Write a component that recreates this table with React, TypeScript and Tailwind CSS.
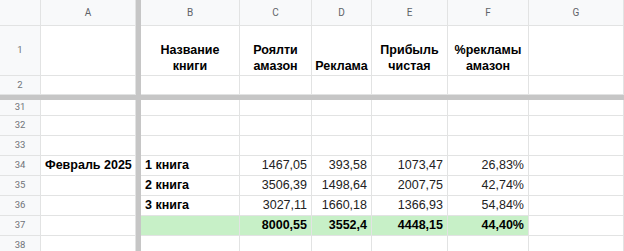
import React from 'react';

// Column widths in px: row-number, A, freeze bar, B..G
const COLS = ['w-[41px]', 'w-[95px]', 'w-[5px]', 'w-[99px]', 'w-[72px]', 'w-[60px]', 'w-[76px]', 'w-[81px]', 'w-[95px]'];

const cell = 'shrink-0 border-r border-b border-[#e2e3e3] overflow-hidden';

function HeaderRow() {
  const letters = ['A', '', 'B', 'C', 'D', 'E', 'F', 'G'];
  return (
    <div className="flex h-[26px] bg-[#f8f9fa]">
      <div className={`${cell} ${COLS[0]} border-[#dadcdf]`} />
      {letters.map((l, i) =>
        l === '' ? (
          <div key={i} className={`shrink-0 ${COLS[2]} bg-[#c6c6c6]`} />
        ) : (
          <div
            key={i}
            className={`${cell} ${COLS[i + 1]} border-[#dadcdf] flex items-center justify-center text-[10px] text-[#5f6368] font-['Roboto',sans-serif]`}
          >
            {l}
          </div>
        )
      )}
    </div>
  );
}

type Cells = { a?: string; b?: React.ReactNode; c?: string; d?: string; e?: string; f?: string };

function Row({ n, h, data = {}, title = false, total = false }: { n: string; h: string; data?: Cells; title?: boolean; total?: boolean }) {
  const green = total ? 'bg-[#c7f0c7]' : '';
  const num = `${cell} flex items-center justify-end pr-[4px] ${total ? 'font-bold text-black' : 'text-[#222]'} ${green}`;
  const head = `${cell} flex items-end justify-center text-center font-bold leading-[16px] pb-[1px] text-black`;
  return (
    <div className={`flex ${h} font-['Liberation_Sans',Arial,sans-serif] text-[12.5px]`}>
      <div className={`${cell} ${COLS[0]} bg-[#f8f9fa] border-[#dadcdf] flex items-center justify-center text-[9.5px] text-[#6f7378] font-['Roboto',sans-serif]`}>
        {n}
      </div>
      <div className={`${cell} ${COLS[1]} flex items-center pl-[4px] font-bold text-black whitespace-nowrap`}>{data.a}</div>
      <div className={`shrink-0 ${COLS[2]} bg-[#c6c6c6]`} />
      {title ? (
        <>
          <div className={`${head} ${COLS[3]}`}>{data.b}</div>
          <div className={`${head} ${COLS[4]}`}>{data.c}</div>
          <div className={`${head} ${COLS[5]}`}>{data.d}</div>
          <div className={`${head} ${COLS[6]}`}>{data.e}</div>
          <div className={`${head} ${COLS[7]}`}>{data.f}</div>
        </>
      ) : (
        <>
          <div className={`${cell} ${COLS[3]} flex items-center pl-[4px] font-bold text-black ${green}`}>{data.b}</div>
          <div className={`${num} ${COLS[4]}`}>{data.c}</div>
          <div className={`${num} ${COLS[5]}`}>{data.d}</div>
          <div className={`${num} ${COLS[6]}`}>{data.e}</div>
          <div className={`${num} ${COLS[7]}`}>{data.f}</div>
        </>
      )}
      <div className={`${cell} ${COLS[8]}`} />
    </div>
  );
}

export default function App() {
  return (
    <div className="w-[624px] h-[251px] overflow-hidden bg-white">
      <HeaderRow />
      <Row
        n="1"
        h="h-[50px]"
        title
        data={{
          b: (
            <span>
              Название
              <br />
              книги
            </span>
          ),
          c: 'Роялти амазон',
          d: 'Реклама',
          e: 'Прибыль чистая',
          f: '%рекламы амазон',
        }}
      />
      <Row n="2" h="h-[19px]" />
      {/* frozen rows divider */}
      <div className="h-[5px] bg-[#c6c6c6]" />
      <Row n="31" h="h-[16px]" />
      <Row n="32" h="h-[20px]" />
      <Row n="33" h="h-[20px]" />
      <Row n="34" h="h-[20px]" data={{ a: 'Февраль 2025', b: '1 книга', c: '1467,05', d: '393,58', e: '1073,47', f: '26,83%' }} />
      <Row n="35" h="h-[20px]" data={{ b: '2 книга', c: '3506,39', d: '1498,64', e: '2007,75', f: '42,74%' }} />
      <Row n="36" h="h-[20px]" data={{ b: '3 книга', c: '3027,11', d: '1660,18', e: '1366,93', f: '54,84%' }} />
      <Row n="37" h="h-[20px]" total data={{ c: '8000,55', d: '3552,4', e: '4448,15', f: '44,40%' }} />
      <Row n="38" h="h-[20px]" />
    </div>
  );
}
